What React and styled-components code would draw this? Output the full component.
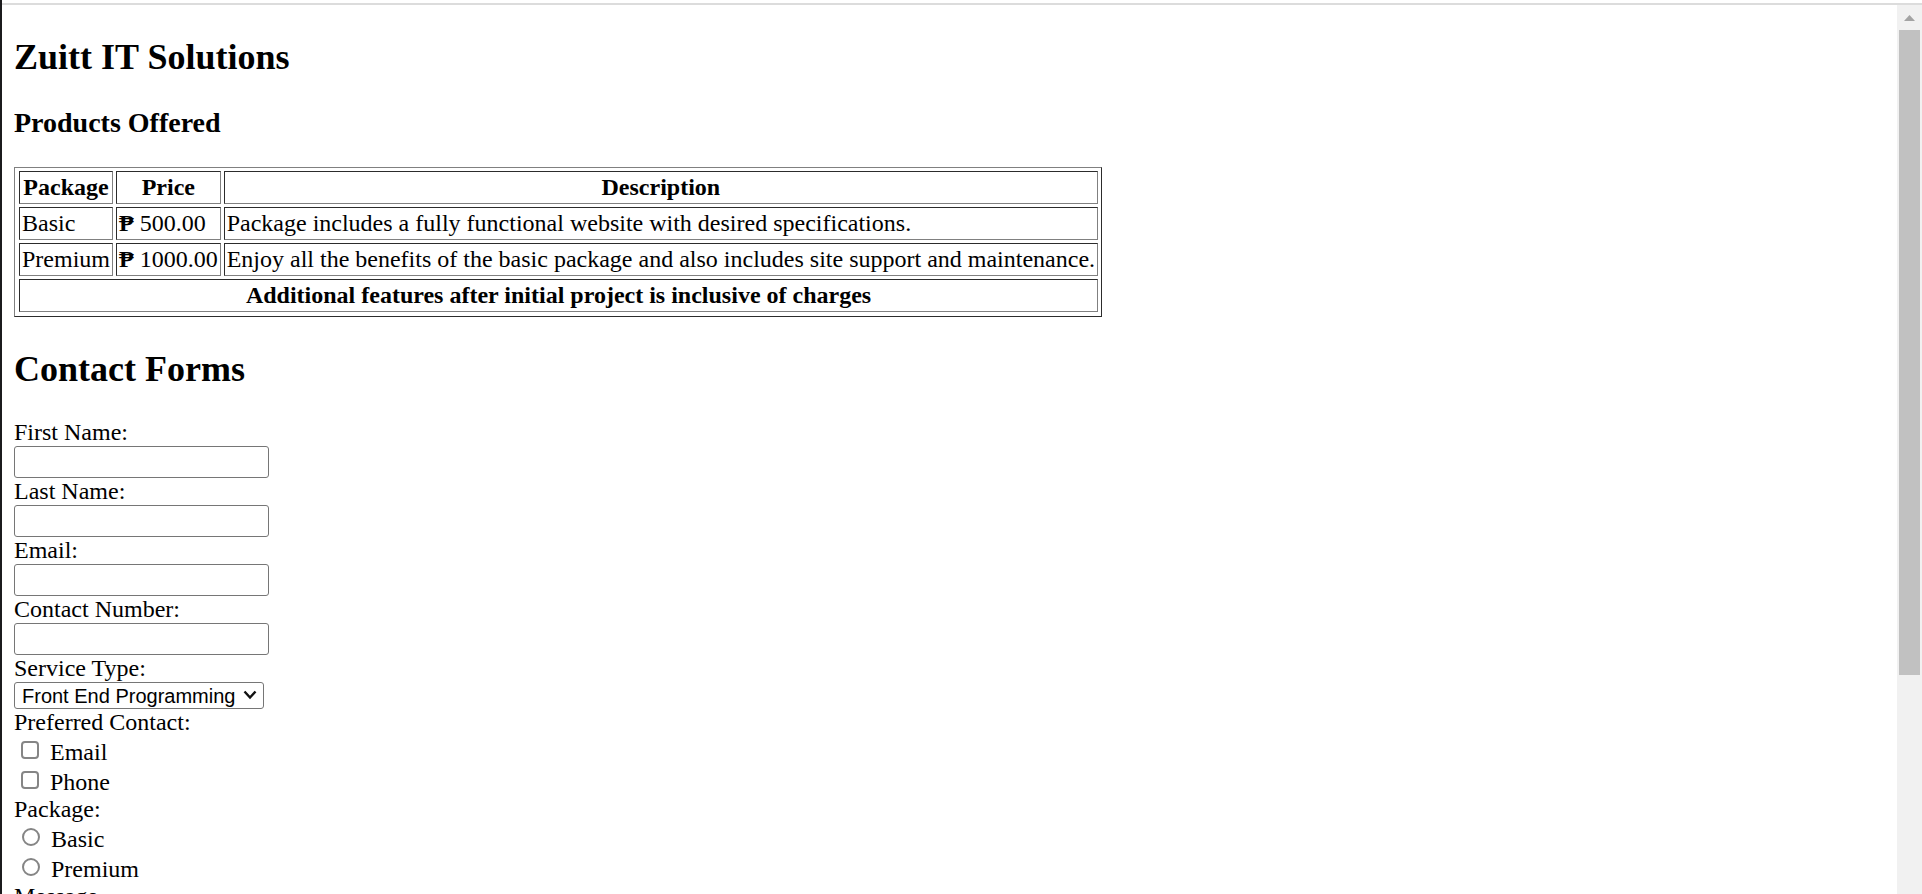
import React from "react";
import styled, { createGlobalStyle } from "styled-components";

const GlobalStyle = createGlobalStyle`
  *, *::before, *::after { box-sizing: border-box; }
  body {
    margin: 0;
    background: #fff;
    color: #000;
    font: 24px/27px "Liberation Serif", "Times New Roman", serif;
  }
`;

const Window = styled.div`
  display: flex;
  flex-direction: column;
  height: 100vh;
  overflow: hidden;
  border-left: 2px solid #1b1b1d;
`;

const TopEdge = styled.div`
  flex: none;
  height: 5px;
  border-bottom: 2px solid #dcdcdc;
`;

const Viewport = styled.div`
  display: flex;
  flex: 1;
  min-height: 0;
`;

const Page = styled.main`
  flex: 1;
  min-width: 0;
  overflow: hidden;
  padding: 0 12px;
`;

const Title = styled.h1`
  margin: 31px 0 29px;
  font-size: 36px;
  line-height: 42px;
`;

const Subtitle = styled.h2`
  margin: 28px 0;
  font-size: 28px;
  line-height: 32px;
`;

const PriceTable = styled.table`
  border: 1px solid;
  border-color: #808080 #2c2c2c #2c2c2c #808080;
  border-collapse: separate;
  border-spacing: 3px;
  padding: 0 0 1px 1px;
  line-height: 27px;
`;

const cell = `
  border: 1px solid;
  border-color: #2c2c2c #808080 #808080 #2c2c2c;
  padding: 2px;
  white-space: nowrap;
`;

const Cell = styled.td`${cell}`;

const HeadCell = styled.th`
  ${cell}
  text-align: center;
`;

const Currency = styled.span`
  font-weight: bold;
`;

const Form = styled.form`
  display: flex;
  flex-direction: column;
  align-items: flex-start;
`;

const TextInput = styled.input`
  width: 255px;
  height: 32px;
  border: 1px solid #767676;
  border-radius: 3px;
  padding: 2px 4px;
  background: #fff;
  font: 20px "Liberation Sans", Arial, sans-serif;
`;

const SelectWrap = styled.div`
  position: relative;
  width: 250px;
  height: 27px;
`;

const Select = styled.select`
  display: block;
  width: 100%;
  height: 100%;
  appearance: none;
  border: 1px solid #767676;
  border-radius: 3px;
  padding: 0 7px;
  background: #fff;
  color: #000;
  font: 20px "Liberation Sans", Arial, sans-serif;
`;

const Chevron = styled.svg`
  position: absolute;
  top: 8px;
  right: 7px;
  pointer-events: none;
`;

const Group = styled.fieldset`
  min-width: 0;
  margin: 0;
  border: 0;
  padding: 0;
`;

const Legend = styled.legend`
  padding: 0;
`;

const Choice = styled.label`
  display: flex;
  align-items: flex-start;
  gap: 11px;
  height: 30px;
  padding: 3px 0 0 ${(p) => (p.$round ? 8 : 7)}px;
`;

const Tick = styled.input`
  appearance: none;
  flex: none;
  width: 18px;
  height: 18px;
  margin: 2px 0 0;
  border: 2px solid #858585;
  border-radius: ${(p) => (p.type === "radio" ? "50%" : "4px")};
  background: #fff;

  &:checked { background: #0075ff; }
`;

const Message = styled.textarea`
  width: 255px;
  height: 56px;
`;

const Scrollbar = styled.div`
  display: flex;
  flex-direction: column;
  align-items: center;
  flex: none;
  width: 25px;
  background: #f1f1f1;
`;

const ScrollArrow = styled.svg`
  flex: none;
  display: block;
`;

const Thumb = styled.div`
  width: 21px;
  height: 72.5%;
  background: #c1c1c1;
`;

const packages = [
  ["Basic", "500.00", "Package includes a fully functional website with desired specifications."],
  ["Premium", "1000.00", "Enjoy all the benefits of the basic package and also includes site support and maintenance."],
];

const fields = [
  ["firstName", "First Name:", "text"],
  ["lastName", "Last Name:", "text"],
  ["email", "Email:", "email"],
  ["phone", "Contact Number:", "tel"],
];

function ChoiceGroup({ legend, type, name, options }) {
  return (
    <Group>
      <Legend>{legend}</Legend>
      {options.map((option) => (
        <Choice key={option} $round={type === "radio"}>
          <Tick type={type} name={name} value={option} />
          {option}
        </Choice>
      ))}
    </Group>
  );
}

export default function App() {
  return (
    <Window>
      <GlobalStyle />
      <TopEdge />
      <Viewport>
        <Page>
          <Title>Zuitt IT Solutions</Title>
          <Subtitle>Products Offered</Subtitle>
          <PriceTable>
            <thead>
              <tr>
                <HeadCell>Package</HeadCell>
                <HeadCell>Price</HeadCell>
                <HeadCell>Description</HeadCell>
              </tr>
            </thead>
            <tbody>
              {packages.map(([name, price, description]) => (
                <tr key={name}>
                  <Cell>{name}</Cell>
                  <Cell><Currency>₱</Currency> {price}</Cell>
                  <Cell>{description}</Cell>
                </tr>
              ))}
            </tbody>
            <tfoot>
              <tr>
                <HeadCell colSpan={3}>
                  Additional features after initial project is inclusive of charges
                </HeadCell>
              </tr>
            </tfoot>
          </PriceTable>
          <Title>Contact Forms</Title>
          <Form>
            {fields.map(([id, label, type]) => (
              <React.Fragment key={id}>
                <label htmlFor={id}>{label}</label>
                <TextInput id={id} name={id} type={type} />
              </React.Fragment>
            ))}
            <label htmlFor="service">Service Type:</label>
            <SelectWrap>
              <Select id="service" name="service">
                <option>Front End Programming</option>
              </Select>
              <Chevron width="14" height="10" viewBox="0 0 14 10" aria-hidden="true">
                <path d="M1.5 1.5 7 7.5 12.5 1.5" fill="none" stroke="#111" strokeWidth="2.4" />
              </Chevron>
            </SelectWrap>
            <ChoiceGroup legend="Preferred Contact:" type="checkbox" name="contact" options={["Email", "Phone"]} />
            <ChoiceGroup legend="Package:" type="radio" name="package" options={["Basic", "Premium"]} />
            <label htmlFor="message">Message</label>
            <Message id="message" name="message" />
          </Form>
        </Page>
        <Scrollbar aria-hidden="true">
          <ScrollArrow width="25" height="25" viewBox="0 0 25 25">
            <path d="M7 16 12.5 10 18 16Z" fill="#a3a3a3" />
          </ScrollArrow>
          <Thumb />
        </Scrollbar>
      </Viewport>
    </Window>
  );
}
